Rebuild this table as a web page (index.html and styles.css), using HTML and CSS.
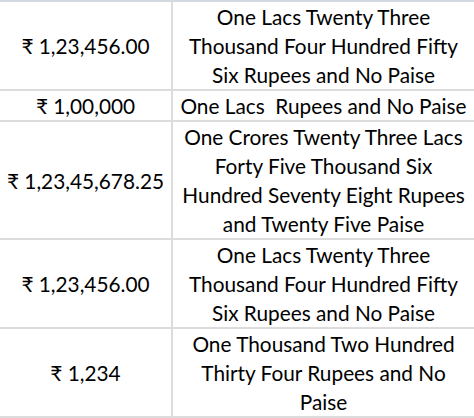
FILE: index.html
```html
<!DOCTYPE html>
<html>
<head>
<meta charset="utf-8">
<link rel="stylesheet" href="styles.css">
</head>
<body>
<table class="sheet">
  <tr class="r3">
    <td class="amt">₹ 1,23,456.00</td>
    <td class="words">One Lacs Twenty Three<br>Thousand Four Hundred Fifty<br>Six Rupees and No Paise</td>
  </tr>
  <tr class="r1">
    <td class="amt">₹ 1,00,000</td>
    <td class="words">One Lacs&nbsp; Rupees and No Paise</td>
  </tr>
  <tr class="r4">
    <td class="amt">₹ 1,23,45,678.25</td>
    <td class="words">One Crores Twenty Three Lacs<br>Forty Five Thousand Six<br>Hundred Seventy Eight Rupees<br>and Twenty Five Paise</td>
  </tr>
  <tr class="r3">
    <td class="amt">₹ 1,23,456.00</td>
    <td class="words">One Lacs Twenty Three<br>Thousand Four Hundred Fifty<br>Six Rupees and No Paise</td>
  </tr>
  <tr class="r3">
    <td class="amt">₹ 1,234</td>
    <td class="words">One Thousand Two Hundred<br>Thirty Four Rupees and No<br>Paise</td>
  </tr>
</table>
</body>
</html>
```

FILE: styles.css
```css
html, body {
  margin: 0;
  padding: 0;
  background: #ffffff;
}
.sheet {
  width: 474px;
  border-collapse: collapse;
  border-top: 2px solid #d3d9e1;
  font-family: Lato, "DejaVu Sans", sans-serif;
  font-size: 20.8px;
  line-height: 29px;
  color: #000000;
}
.sheet td {
  padding: 0;
  text-align: center;
  vertical-align: middle;
  border-bottom: 2px solid #dcdcdc;
}
.sheet td.amt {
  width: 171px;
  border-right: 2px solid #dcdcdc;
}
.r1 td { height: 28px; }
```
